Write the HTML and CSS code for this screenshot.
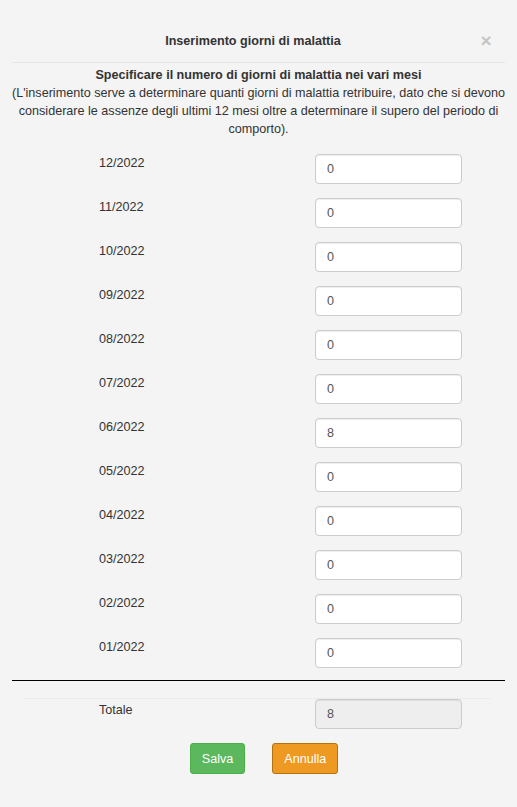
FILE: index.html
```html
<!DOCTYPE html>
<html lang="it">
<head>
<meta charset="utf-8">
<title>Inserimento giorni di malattia</title>
<link rel="stylesheet" href="styles.css">
</head>
<body>
<div class="modal">
  <div class="modal-header">
    <h4 class="modal-title">Inserimento giorni di malattia</h4>
    <button class="close" type="button">&times;</button>
  </div>
  <div class="modal-body">
    <p class="intro"><strong>Specificare il numero di giorni di malattia nei vari mesi</strong><br>(L'inserimento serve a determinare quanti giorni di malattia retribuire, dato che si devono considerare le assenze degli ultimi 12 mesi oltre a determinare il supero del periodo di comporto).</p>
    <div class="months">
      <div class="row"><label>12/2022</label><input class="field" type="text" value="0"></div>
      <div class="row"><label>11/2022</label><input class="field" type="text" value="0"></div>
      <div class="row"><label>10/2022</label><input class="field" type="text" value="0"></div>
      <div class="row"><label>09/2022</label><input class="field" type="text" value="0"></div>
      <div class="row"><label>08/2022</label><input class="field" type="text" value="0"></div>
      <div class="row"><label>07/2022</label><input class="field" type="text" value="0"></div>
      <div class="row"><label>06/2022</label><input class="field" type="text" value="8"></div>
      <div class="row"><label>05/2022</label><input class="field" type="text" value="0"></div>
      <div class="row"><label>04/2022</label><input class="field" type="text" value="0"></div>
      <div class="row"><label>03/2022</label><input class="field" type="text" value="0"></div>
      <div class="row"><label>02/2022</label><input class="field" type="text" value="0"></div>
      <div class="row"><label>01/2022</label><input class="field" type="text" value="0"></div>
    </div>
    <hr class="sep">
    <div class="total-wrap">
      <div class="row"><label>Totale</label><input class="field readonly" type="text" value="8" readonly></div>
    </div>
    <div class="actions">
      <button class="btn btn-success" type="button">Salva</button>
      <button class="btn btn-warning" type="button">Annulla</button>
    </div>
  </div>
</div>
</body>
</html>
```
FILE: styles.css
```css
* { box-sizing: border-box; }
html, body {
  margin: 0;
  padding: 0;
  background: #f4f4f4;
}
body {
  font-family: "Liberation Sans", Arial, sans-serif;
  font-size: 12.6px;
  line-height: 18px;
  color: #333;
}
.modal {
  margin: 0 12px;
}
.modal-header {
  display: flex;
  align-items: flex-start;
  padding: 32px 14px 12px 13px;
  border-bottom: 1px solid #e5e5e5;
}
.modal-title {
  flex: 1;
  margin: 0;
  text-align: center;
  font-size: 12.6px;
  line-height: 18px;
  font-weight: bold;
  color: #333;
}
.close {
  width: 10px;
  padding: 0;
  margin: 0;
  border: 0;
  background: none;
  font-family: "Liberation Sans", Arial, sans-serif;
  font-size: 19px;
  font-weight: bold;
  line-height: 18px;
  color: #c4c4c4;
  display: flex;
  justify-content: center;
  overflow: visible;
}
.modal-body {
  padding-top: 3px;
}
.intro {
  margin: 0 -10px;
  text-align: center;
}
.months {
  display: flex;
  flex-direction: column;
  gap: 14px;
  margin-top: 16px;
}
.row {
  display: grid;
  grid-template-columns: 216px 147px;
  padding-left: 87px;
  align-items: start;
}
.row label {
  line-height: 18px;
}
.field {
  width: 147px;
  height: 30px;
  padding: 0 11px;
  border: 1px solid #ccc;
  border-radius: 4px;
  background: #fff;
  font-family: "Liberation Sans", Arial, sans-serif;
  font-size: 12.6px;
  color: #555;
  box-shadow: inset 0 1px 1px rgba(0,0,0,0.075);
}
.field.readonly {
  background: #eee;
}
.sep {
  margin: 12px 0 0 0;
  border: 0;
  border-top: 1px solid #000;
  height: 0;
}
.total-wrap {
  margin: 17px 15px 0 12px;
  border-top: 1px solid #ebebeb;
}
.total-wrap .row {
  padding-left: 75px;
}
.total-wrap .row label {
  padding-top: 2px;
}
.actions {
  display: flex;
  justify-content: center;
  gap: 27px;
  margin-top: 14px;
  padding-left: 11px;
}
.btn {
  height: 31px;
  padding: 0 11px;
  border: 1px solid transparent;
  border-radius: 3px;
  font-family: "Liberation Sans", Arial, sans-serif;
  font-size: 12.6px;
  line-height: 18px;
  color: #fff;
}
.btn-success {
  background: #5cb85c;
  border-color: #4cae4c;
}
.btn-warning {
  background: #ee9a22;
  border-color: #b5730f;
}
```
